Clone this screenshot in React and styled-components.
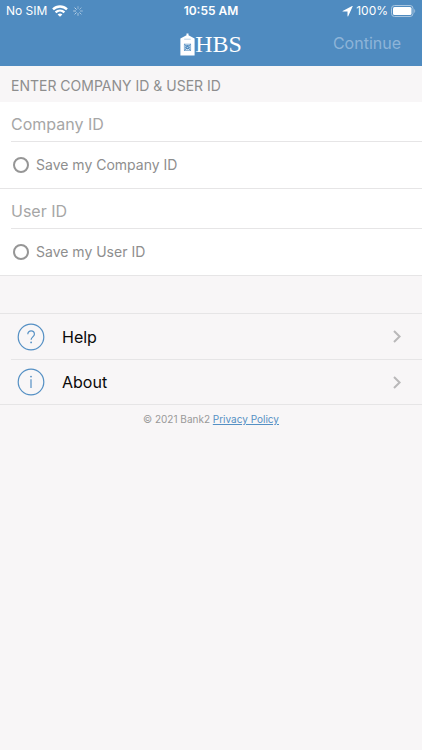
import React, { useState } from 'react';
import styled, { ThemeProvider, createGlobalStyle } from 'styled-components';

const theme = {
  bg: '#f8f6f7',
  bar: '#4f8bc0',
  accent: '#5590c4',
  surface: '#ffffff',
  line: '#e6e5e6',
  muted: '#8e8e8e',
  placeholder: '#a6a6a6',
  text: '#0a0a0a',
};

const GlobalStyle = createGlobalStyle`
  * {
    box-sizing: border-box;
  }
  body {
    margin: 0;
    background: ${theme.bg};
    font-family: Inter, 'Liberation Sans', sans-serif;
  }
`;

const Page = styled.div`
  min-height: 100vh;
  background: ${({ theme }) => theme.bg};
  color: ${({ theme }) => theme.text};
`;

const Header = styled.header`
  background: ${({ theme }) => theme.bar};
  color: #fff;
`;

const Bar = styled.div`
  display: grid;
  grid-template-columns: 1fr auto 1fr;
  align-items: center;
  height: ${({ $height }) => $height}px;
  padding: 0 ${({ $side }) => $side}px;
`;

const StatusBar = styled(Bar)`
  font-size: 12px;
  line-height: 22px;
`;

const StatusGroup = styled.div`
  display: flex;
  align-items: center;
  justify-content: ${({ $end }) => ($end ? 'flex-end' : 'flex-start')};
  gap: ${({ $end }) => ($end ? 3 : 5)}px;
`;

const Clock = styled.time`
  font-weight: 600;
`;

const Logo = styled.h1`
  grid-column: 2;
  display: flex;
  align-items: center;
  margin: 0;
  font-family: 'Liberation Serif', serif;
  font-size: 24px;
  font-weight: 400;
  line-height: 28px;
`;

const ContinueButton = styled.button`
  justify-self: end;
  padding: 0 0 2px;
  border: none;
  background: none;
  color: #8db4d8;
  font: inherit;
  font-size: 16px;
  line-height: 24px;
`;

const SectionTitle = styled.h2`
  margin: 0;
  padding: 10px 11px 6px;
  color: ${({ theme }) => theme.muted};
  font-size: 14px;
  font-weight: 400;
  line-height: 20px;
`;

const FieldGroup = styled.div`
  background: ${({ theme }) => theme.surface};
  border-bottom: 1px solid ${({ theme }) => theme.line};
`;

const FieldRow = styled.div`
  margin-left: 11px;
  border-bottom: 1px solid ${({ theme }) => theme.line};
`;

const TextInput = styled.input`
  display: block;
  width: 100%;
  height: 39px;
  padding: 4px 0 0;
  border: none;
  outline: none;
  background: none;
  color: ${({ theme }) => theme.text};
  font: inherit;
  font-size: 16px;

  &::placeholder {
    color: ${({ theme }) => theme.placeholder};
    opacity: 1;
  }
`;

const SaveLabel = styled.label`
  display: flex;
  align-items: center;
  gap: 7px;
  height: 46px;
  padding-left: 13px;
  color: ${({ theme }) => theme.muted};
  font-size: 14px;
  line-height: 16px;
`;

const RoundCheckbox = styled.input`
  appearance: none;
  width: 16px;
  height: 16px;
  margin: 0;
  border: 2px solid #969696;
  border-radius: 50%;

  &:checked {
    background: ${({ theme }) => theme.accent};
  }
`;

const Menu = styled.nav`
  margin-top: 37px;
  border-top: 1px solid ${({ theme }) => theme.line};
  border-bottom: 1px solid ${({ theme }) => theme.line};
`;

const MenuLink = styled.a`
  display: flex;
  align-items: center;
  margin-left: 11px;
  padding: 0 21px 0 6px;
  height: 45px;
  color: inherit;
  font-size: 16px;
  text-decoration: none;

  & + & {
    border-top: 1px solid ${({ theme }) => theme.line};
  }
  span {
    flex: 1;
    margin-left: 17px;
  }
`;

const Footer = styled.footer`
  padding-top: 5px;
  color: #999;
  font-size: 10px;
  line-height: 18px;
  text-align: center;

  a {
    color: ${({ theme }) => theme.accent};
  }
`;

function WifiIcon() {
  return (
    <svg width="16" height="12" viewBox="0 0 16 12" fill="none" stroke="#fff" strokeWidth="2.4">
      <path d="M1 4.3C5 .5 11 .5 15 4.3" />
      <path d="M3.6 7.3c2.5-2.3 6.3-2.3 8.8 0" />
      <path d="M8 11.8 5.6 9.4c1.4-1.2 3.4-1.2 4.8 0z" fill="#fff" stroke="none" />
    </svg>
  );
}

function SpinnerIcon() {
  return (
    <svg width="10" height="10" viewBox="0 0 10 10" stroke="#fff" strokeWidth=".9">
      {[0, 45, 90, 135, 180, 225, 270, 315].map((angle, i) => (
        <path key={angle} d="M5 .2v2.8" transform={`rotate(${angle} 5 5)`} opacity={0.4 + i * 0.04} />
      ))}
    </svg>
  );
}

function LocationIcon() {
  return (
    <svg width="11" height="11" viewBox="0 0 11 11" fill="#fff">
      <path d="M10.6.5 6.2 10.3c-.2.4-.7.3-.7-.2V5.6H.9c-.5 0-.6-.5-.2-.7L10.1.1c.4-.2.7.1.5.4z" />
    </svg>
  );
}

function BatteryIcon() {
  return (
    <svg width="25" height="12" viewBox="0 0 25 12" fill="none">
      <rect x=".5" y=".5" width="21.5" height="11" rx="3" stroke="#a9c6e0" />
      <rect x="2" y="2" width="18.5" height="8" rx="1.5" fill="#fff" />
      <path d="M23.3 4v4c1.2-.5 1.2-3.5 0-4z" fill="#a9c6e0" />
    </svg>
  );
}

function LogoMark() {
  return (
    <svg width="15" height="23" viewBox="0 0 15 23" fill="none">
      <path d="M.4 22.4V5.4L6.5 2.2V.6h2v1.6l6.1 3.2v17z" fill="#fff" />
      <path d="M4.2 6.2h6.6" stroke="#a9c6e0" strokeWidth=".8" />
      <path d="M4.4 11.2v6.2h6.2v-6.2z" stroke="#6d9fcd" strokeWidth=".8" />
      <path d="m4.2 11 6.6 6.6M10.8 11l-6.6 6.6" stroke="#4f8bc0" strokeWidth="1" />
      <circle cx="7.5" cy="14.3" r="2.3" fill="#4f8bc0" />
      <path d="m6.6 13.8.9 1 1.1-1.2" stroke="#fff" strokeWidth=".6" />
    </svg>
  );
}

function HelpIcon() {
  return (
    <svg width="28" height="28" viewBox="0 0 28 28" fill="none" stroke={theme.accent} strokeWidth="1.2">
      <circle cx="14" cy="14" r="12.8" />
      <path d="M10.8 11.2c0-4.4 6.6-4.3 6.6 0 0 2.7-3.3 2.7-3.3 5.6" />
      <circle cx="14.1" cy="19.4" r=".9" fill={theme.accent} stroke="none" />
    </svg>
  );
}

function InfoIcon() {
  return (
    <svg width="28" height="28" viewBox="0 0 28 28" fill="none" stroke={theme.accent} strokeWidth="1.2">
      <circle cx="14" cy="14" r="12.8" />
      <path d="M14 11.2v8.8" />
      <circle cx="14" cy="8.6" r=".9" fill={theme.accent} stroke="none" />
    </svg>
  );
}

function Chevron() {
  return (
    <svg width="8" height="13" viewBox="0 0 8 13" fill="none" stroke="#b9b8b9" strokeWidth="2">
      <path d="m1 1 5.6 5.5L1 12" />
    </svg>
  );
}

function IdField({ name, label }) {
  const [value, setValue] = useState('');

  return (
    <FieldGroup>
      <FieldRow>
        <TextInput
          name={name}
          aria-label={label}
          placeholder={label}
          value={value}
          onChange={(e) => setValue(e.target.value)}
        />
      </FieldRow>
      <SaveLabel>
        <RoundCheckbox type="checkbox" name={`${name}-save`} />
        Save my {label}
      </SaveLabel>
    </FieldGroup>
  );
}

function App() {
  return (
    <ThemeProvider theme={theme}>
      <GlobalStyle />
      <Page>
        <Header>
          <StatusBar $height={22} $side={6}>
            <StatusGroup>
              No SIM
              <WifiIcon />
              <SpinnerIcon />
            </StatusGroup>
            <Clock>10:55 AM</Clock>
            <StatusGroup $end>
              <LocationIcon />
              100%
              <BatteryIcon />
            </StatusGroup>
          </StatusBar>
          <Bar $height={44} $side={21}>
            <Logo>
              <LogoMark />
              HBS
            </Logo>
            <ContinueButton type="button" disabled>Continue</ContinueButton>
          </Bar>
        </Header>
        <main>
          <form>
            <SectionTitle>ENTER COMPANY ID &amp; USER ID</SectionTitle>
            <IdField name="company" label="Company ID" />
            <IdField name="user" label="User ID" />
          </form>
          <Menu>
            <MenuLink href="#help">
              <HelpIcon />
              <span>Help</span>
              <Chevron />
            </MenuLink>
            <MenuLink href="#about">
              <InfoIcon />
              <span>About</span>
              <Chevron />
            </MenuLink>
          </Menu>
        </main>
        <Footer>
          © 2021 Bank2 <a href="#privacy">Privacy Policy</a>
        </Footer>
      </Page>
    </ThemeProvider>
  );
}

export default App;
